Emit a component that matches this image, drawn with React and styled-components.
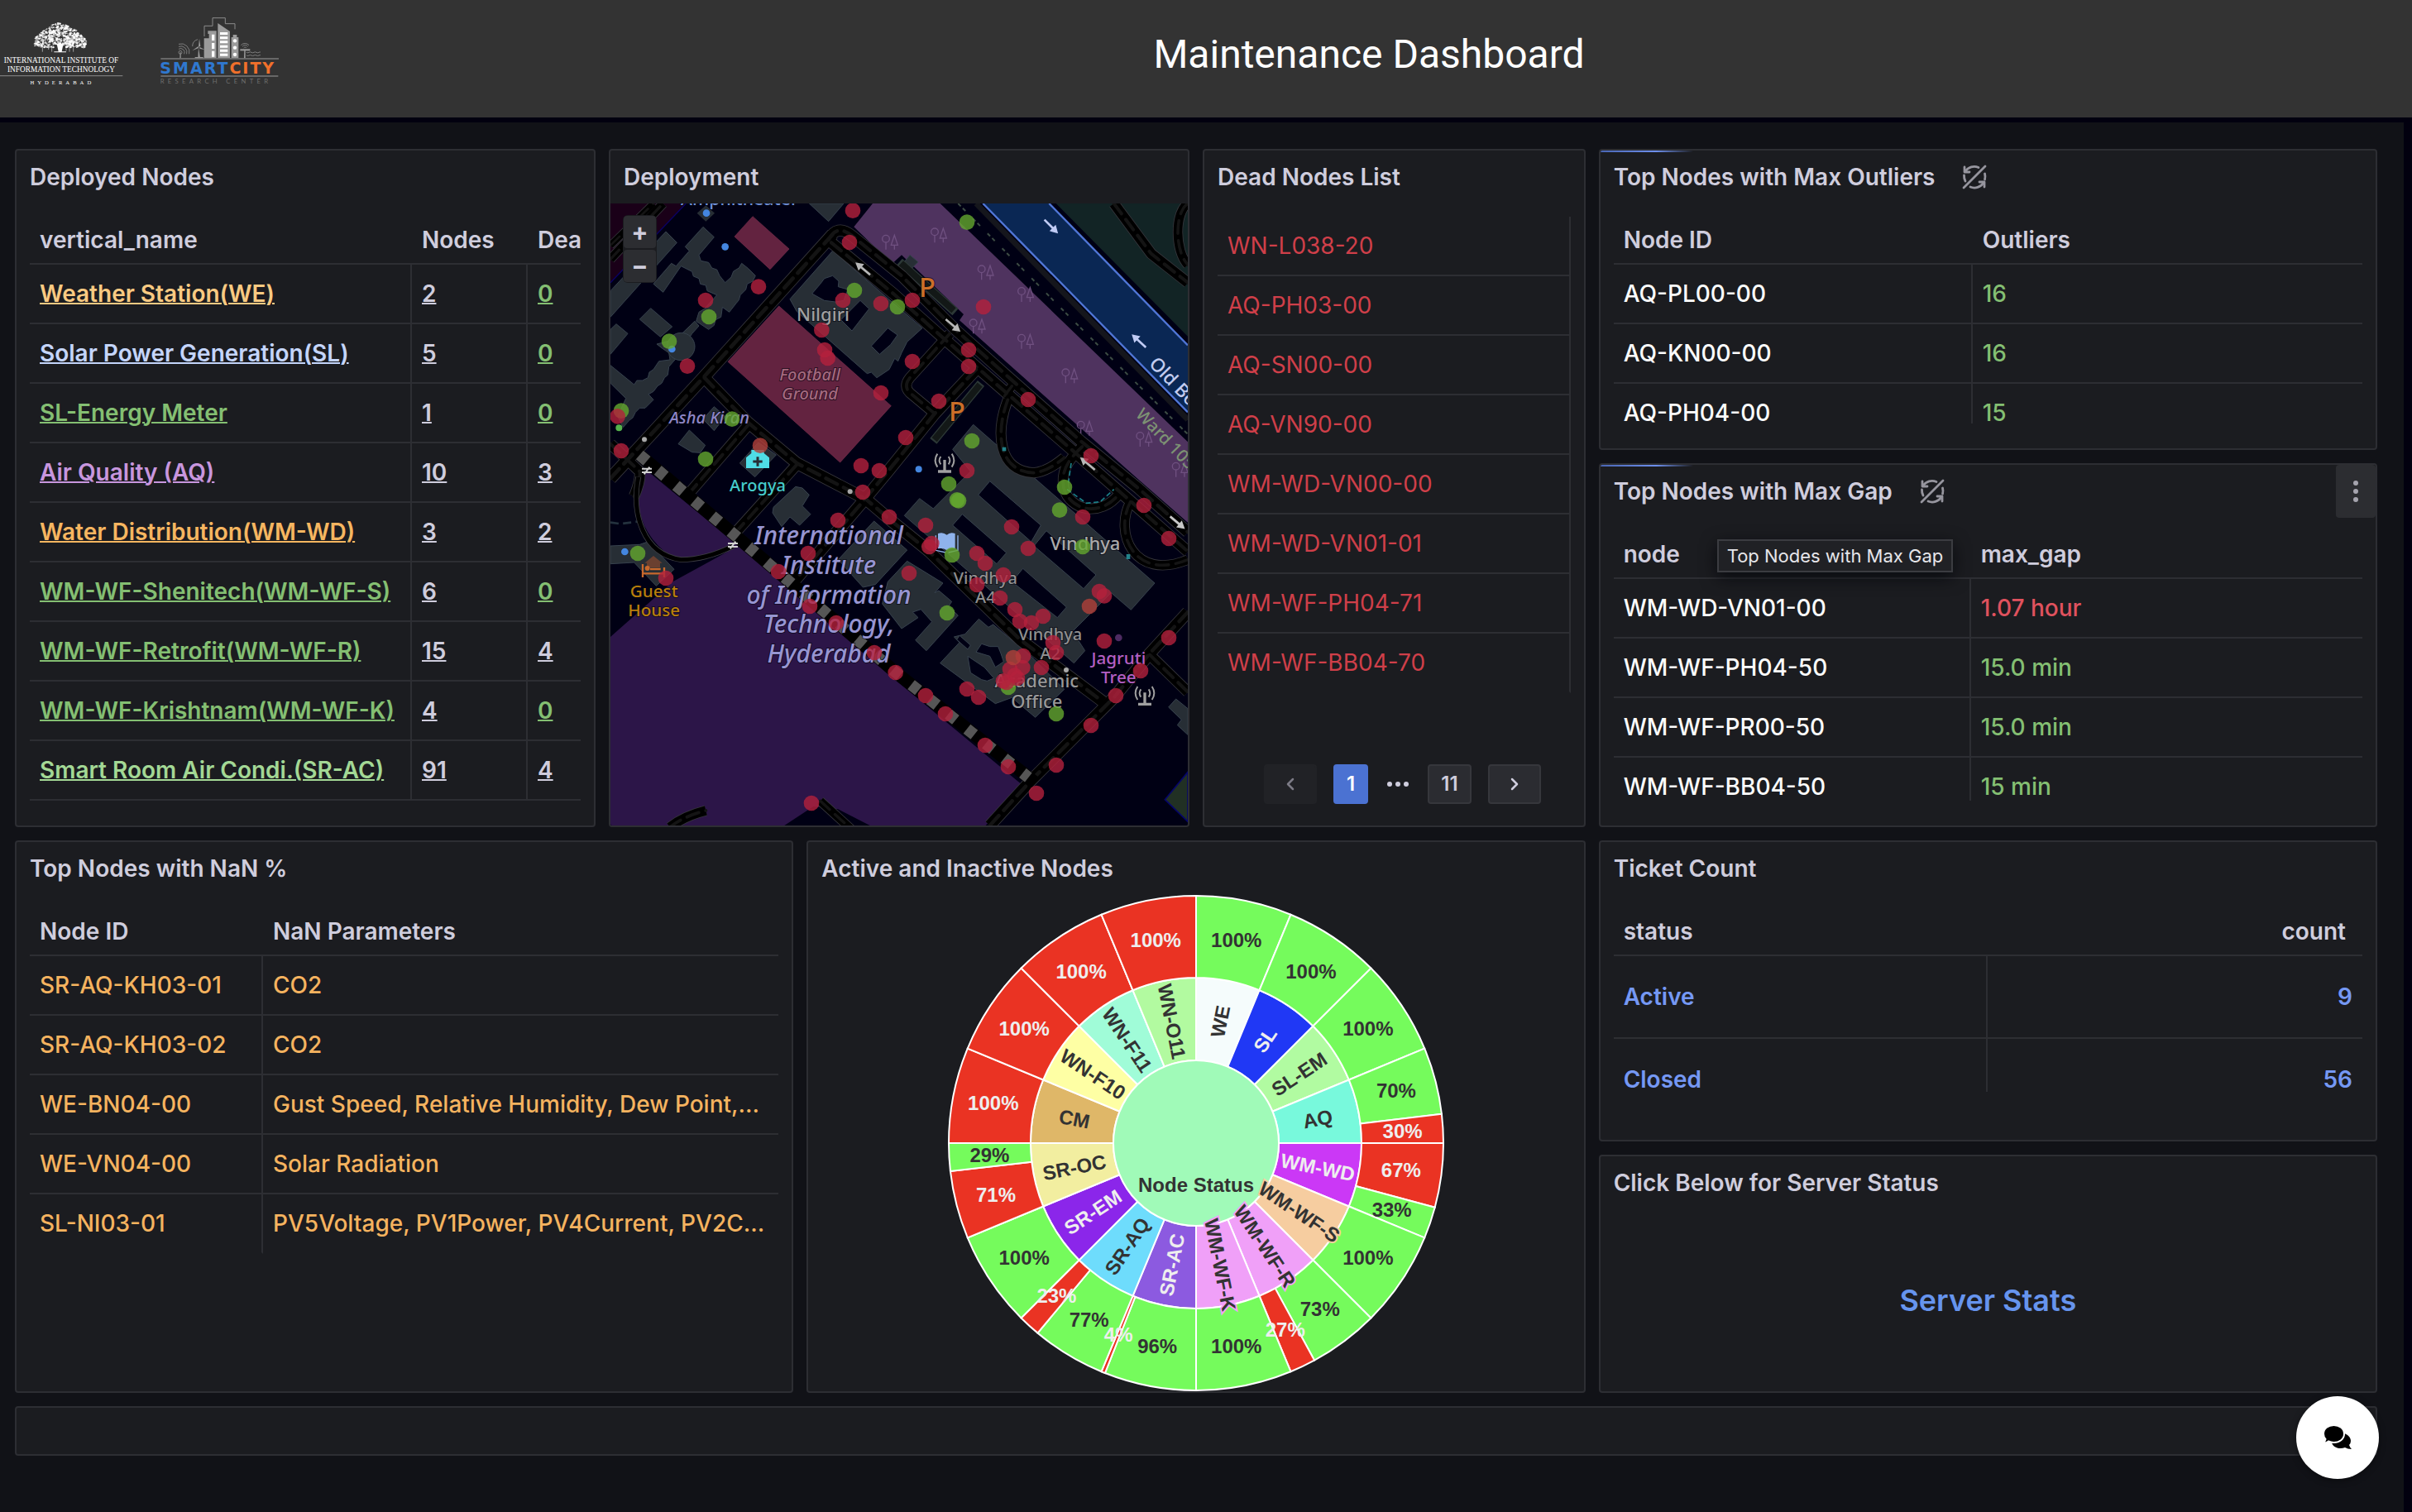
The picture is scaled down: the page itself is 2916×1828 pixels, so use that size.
import React from "react";
import styled, { createGlobalStyle } from "styled-components";

const c = {
  page: "#111217",
  panel: "#1b1c20",
  line: "#2d2e33",
  text: "#cfcddd",
  white: "#fcfcfc",
  green: "#84bf72",
  orange: "#f5b35f",
  red: "#cf3f49",
  blue: "#7598f4",
};

const GlobalStyle = createGlobalStyle`
  * { box-sizing: border-box; }
  body {
    margin: 0;
    background: #02000f;
    color: ${c.text};
    font-family: Inter, "Liberation Sans", sans-serif;
    font-size: 28px;
  }
`;

const Page = styled.div`
  min-height: 100vh;
  display: flex;
  flex-direction: column;
`;

const Header = styled.header`
  display: flex;
  align-items: flex-start;
  background: #333333;
  padding-bottom: 32px;
`;

const Logos = styled.div`
  display: flex;
  gap: 41px;
  padding-right: 52px;
  svg { display: block; }
`;

const PageTitle = styled.h1`
  flex: 1;
  margin: 0;
  padding-top: 38px;
  text-align: center;
  color: #ffffff;
  font: 400 48px/56px Roboto, "Liberation Sans", sans-serif;
`;

const Main = styled.main`
  flex: 1;
  margin: 6px 10px 0 0;
  padding: 32px 32px 68px 18px;
  background: ${c.page};
`;

const Grid = styled.div`
  display: grid;
  grid-template-columns: repeat(24, minmax(0, 1fr));
  grid-auto-rows: 60px;
  gap: 16px;
`;

const PanelBox = styled.section`
  grid-column: ${(p) => p.$col};
  grid-row: ${(p) => p.$row};
  position: relative;
  display: flex;
  flex-direction: column;
  min-width: 0;
  overflow: hidden;
  border: 2px solid ${c.line};
  border-radius: 4px;
  background: ${c.panel};
`;

const PanelHead = styled.div`
  flex: none;
  display: flex;
  align-items: center;
  gap: 32px;
  height: 64px;
  padding-left: 16px;
  color: #96959e;
`;

const PanelTitle = styled.h2`
  margin: 0;
  color: ${c.text};
  font-size: 28px;
  line-height: 44px;
  font-weight: 600;
`;

const LoadingBar = styled.div`
  position: absolute;
  top: 0;
  left: 0;
  width: 12%;
  height: 2px;
  background: linear-gradient(90deg, #4a66b4, #6d8fec 60%, transparent);
`;

const MenuButton = styled.button`
  position: absolute;
  top: 0;
  right: 0;
  width: 48px;
  height: 64px;
  display: grid;
  place-items: center;
  padding: 0;
  border: 0;
  border-radius: 4px;
  background: #2c2d31;
  color: #a5a4ae;
`;

const Tooltip = styled.div`
  position: absolute;
  top: 90px;
  left: 141px;
  padding: 4px 10px;
  border: 2px solid #3b3c41;
  background: #202125;
  box-shadow: 0 6px 20px rgba(1, 4, 9, 0.7);
  color: #e6e6ea;
  font-size: 22px;
  line-height: 28px;
  white-space: nowrap;
`;

const TableClip = styled.div`
  flex: 1;
  min-height: 0;
  overflow: hidden;
  margin: 16px 16px ${(p) => p.$bottom || 30}px;
`;

const Table = styled.table`
  width: ${(p) => p.$width || "100%"};
  table-layout: fixed;
  border-collapse: separate;
  border-spacing: 0;
  line-height: 36px;
`;

const Th = styled.th`
  width: ${(p) => p.$width || "auto"};
  height: 58px;
  padding: 0 ${(p) => (p.$right ? 20 : 12)}px 0 12px;
  border-bottom: 2px solid ${c.line};
  font-weight: 600;
  text-align: ${(p) => (p.$right ? "right" : "left")};
`;

const Td = styled.td`
  height: ${(p) => p.$height || 72}px;
  padding: 0 12px;
  overflow: hidden;
  white-space: nowrap;
  text-overflow: ellipsis;
  border-bottom: 2px solid ${c.line};
  border-right: 2px solid ${c.line};
  color: ${(p) => p.$color || c.text};
  font-weight: ${(p) => p.$weight || 500};
  text-align: ${(p) => (p.$right ? "right" : "left")};
  &:last-child { border-right: ${(p) => (p.$closed ? `2px solid ${c.line}` : 0)}; }
  tr:last-child > & { border-bottom-color: ${(p) => (p.$ruled ? c.line : "transparent")}; }
`;

const CellLink = styled.a`
  color: inherit;
  font-weight: 600;
  text-decoration: underline;
  text-decoration-thickness: 2px;
`;

const Pager = styled.ul`
  flex: none;
  display: flex;
  justify-content: center;
  align-items: center;
  margin: 0;
  padding: 0 16px 26px;
  list-style: none;
  li { padding-left: 20px; display: flex; }
`;

const PageButton = styled.button`
  height: 48px;
  padding: 0 14px;
  min-width: ${(p) => (p.$arrow ? 64 : 40)}px;
  display: flex;
  align-items: center;
  justify-content: center;
  border: 2px solid ${(p) => (p.$active ? "#4b72d2" : "#36373c")};
  border-radius: 4px;
  background: ${(p) => (p.$active ? "#4b72d2" : "#2b2c31")};
  color: ${(p) => (p.$active ? "#ffffff" : c.text)};
  font: 600 24px/28px Inter, "Liberation Sans", sans-serif;
  &:disabled { background: #212226; border-color: #212226; color: #7c7b86; }
`;

const MapBody = styled.div`
  position: relative;
  flex: 1;
  min-height: 0;
  svg { display: block; width: 100%; height: 100%; }
`;

const ZoomControls = styled.div`
  position: absolute;
  top: 14px;
  left: 15px;
  display: flex;
  flex-direction: column;
  gap: 2px;
  padding: 1px;
  border-radius: 6px;
  background: #1b1c20;
`;

const ZoomButton = styled.button`
  width: 39px;
  height: 39px;
  padding: 0;
  border: 0;
  border-radius: 4px;
  background: #2c2d31;
  color: ${c.text};
  font: 700 30px/39px Inter, "Liberation Sans", sans-serif;
`;

const ChartBody = styled.div`
  flex: 1;
  min-height: 0;
  display: flex;
  justify-content: center;
  svg { display: block; height: 100%; max-width: 100%; }
`;

const Centered = styled.div`
  flex: 1;
  display: grid;
  place-items: center;
`;

const ServerLink = styled.a`
  color: #6694ee;
  font-size: 36px;
  line-height: 44px;
  font-weight: 600;
  text-decoration: none;
`;

const ChatButton = styled.button`
  position: fixed;
  right: 40px;
  bottom: 40px;
  width: 100px;
  height: 100px;
  display: grid;
  place-items: center;
  padding: 0;
  border: 0;
  border-radius: 50%;
  background: #ffffff;
  color: #000000;
  box-shadow: 0 2px 8px rgba(0, 0, 0, 0.4);
`;

/* ---------- logos and icons ---------- */

const leaves = (() => {
  let s = 7;
  const rnd = () => ((s = (s * 16807) % 2147483647) / 2147483647);
  const out = [];
  while (out.length < 620) {
    const x = 126 + rnd() * 188;
    const y = 82 + rnd() * 92;
    const dx = Math.abs(x - 216);
    const top = 82 + Math.pow(dx / 94, 1.7) * 62;
    const bottom = 172 - (dx < 20 ? 8 : 0);
    if (y > top && y < bottom) out.push([x, y, 1.5 + rnd() * 3.4, 0.45 + rnd() * 0.55]);
  }
  return out;
})();

const InstituteLogo = () => (
  <svg width="151" height="110" viewBox="0 0 453 330" role="img" aria-label="International Institute of Information Technology Hyderabad">
    <g fill="#fff">
      {leaves.map(([x, y, r, o], i) => (
        <ellipse key={i} cx={x} cy={y} rx={r} ry={r * 0.8} opacity={o} />
      ))}
      <path d="M206 160 L212 187 H196 V190 H240 V187 H224 L230 158 Z" />
    </g>
    <g stroke="#fff" strokeWidth="2" opacity=".8">
      <path d="M154 165V188M176 165V180M188 165V188M240 165V184M252 165V188M266 160V188M280 160V172" />
    </g>
    <g fill="#ffffff" fontFamily="'Liberation Serif', serif" textAnchor="middle">
      <text x="222" y="228" fontSize="28">INTERNATIONAL INSTITUTE OF</text>
      <text x="222" y="261" fontSize="28">INFORMATION TECHNOLOGY</text>
      <text x="226" y="305" fontSize="20" letterSpacing="12">HYDERABAD</text>
    </g>
    <path d="M0 275H445" stroke="#8a8a8a" strokeWidth="3" />
  </svg>
);

const CityLogo = () => (
  <svg width="150" height="110" viewBox="575 0 450 330" role="img" aria-label="Smart City Research Center">
    <path d="M740 132V94H770V65H816V86H851V106" fill="none" stroke="#8b8b8b" strokeWidth="3" />
    <g fill="#9b9b9b">
      <path d="M739 139H757V123H753V112H784V211H739ZM789 84L833 114V211H789ZM838 135H844V126H858V135H864V211H838Z" />
      <path d="M719 172L725 211H717ZM719 170L722 140L726 168ZM719 174L696 184L718 168ZM722 170L742 180L724 177ZM652 190H655V211H651ZM885 180H889V211H884Z" />
      <rect x="870" y="178" width="36" height="6" />
      <rect x="706" y="207" width="30" height="4" />
    </g>
    <g fill="#fff">
      <path d="M767 125H777V147H767ZM767 156H777V177H767ZM767 185H777V206H767Z" />
      <path d="M797 117H825V126H797ZM797 133H825V142H797ZM797 148H825V157H797ZM797 164H825V173H797ZM797 179H825V188H797ZM797 194H825V203H797Z" />
      <circle cx="851" cy="148" r="6.5" />
      <circle cx="851" cy="173" r="6.5" />
      <circle cx="851" cy="198" r="6.5" />
    </g>
    <g fill="none" stroke="#8b8b8b" strokeWidth="2.5">
      <circle cx="653" cy="190" r="6" />
      <path d="M647 178A14 14 0 0 1 667 196M647 169A22 22 0 0 1 676 196M647 160A30 30 0 0 1 685 196M697 168A26 26 0 0 1 716 143" />
      <path d="M873 164A19 19 0 0 1 902 164M878 169A12 12 0 0 1 898 169M883 174A6 6 0 0 1 893 174" />
      <path d="M893 190q5 3 9 0t9 0 9 0 9 0 9 0 6 0M893 201q5 3 9 0t9 0 9 0 9 0 9 0 6 0" />
    </g>
    <path d="M582 213H1010M582 276H1008" stroke="#7a7a7a" strokeWidth="4" />
    <text x="579" y="266" fontFamily="'DejaVu Sans', sans-serif" fontSize="57" fontWeight="700" letterSpacing="6" fill="#2f78cf">
      SMART<tspan fill="#f0702b">CITY</tspan>
    </text>
    <text x="580" y="303" fontFamily="Lato, sans-serif" fontSize="23" letterSpacing="13" fill="#6e6e6e">
      RESEARCH CENTER
    </text>
  </svg>
);

const NoRefreshIcon = () => (
  <svg width="32" height="32" viewBox="0 0 32 32" fill="none" stroke="currentColor" strokeWidth="2.8" strokeLinecap="round" strokeLinejoin="round" role="img" aria-label="Auto refresh off">
    <path d="M29 3L3 29" />
    <path d="M4 4V10H10" />
    <path d="M5 9A13 13 0 0 1 21 4.500" />
    <path d="M3.500 14A13 13 0 0 0 5 21" />
    <path d="M28.500 12A13 13 0 0 1 28.500 19" />
    <path d="M28 28V22H22" />
    <path d="M27 23A13 13 0 0 1 11 28" />
  </svg>
);

const Chevron = ({ left }) => (
  <svg width="12" height="16" viewBox="0 0 12 16" fill="none" stroke="currentColor" strokeWidth="2.5" strokeLinecap="round" strokeLinejoin="round" aria-hidden="true">
    <path d={left ? "M9 2L3 8L9 14" : "M3 2L9 8L3 14"} />
  </svg>
);

const Dots = ({ vertical }) => (
  <svg width="32" height="32" viewBox="0 0 32 32" fill="currentColor" aria-hidden="true">
    {[6, 16, 26].map((n) => (
      <circle key={n} cx={vertical ? 16 : n} cy={vertical ? n : 16} r="3" />
    ))}
  </svg>
);

const ChatIcon = () => (
  <svg width="34" height="30" viewBox="0 0 34 30" fill="currentColor" aria-hidden="true">
    <path d="M14 8C22 8 33 11 33 19Q33 22 31 24Q32 27 34 29Q29 29 26 27C18 30 11 26 10 21Z" />
    <path d="M12.500 0C19 0 25 4 25 10.500S19 21 12.500 21Q9 21 6 19.500Q3 21.500 0 21.500Q2 19 2.500 17Q0 14 0 10.500C0 4 6 0 12.500 0Z" stroke="#fff" strokeWidth="2" />
  </svg>
);

/* ---------- map ---------- */

const buildings = [
  "225,330 265,370 24,640 24,545",
  "360,313 400,350 345,415 352,436 380,442 392,462 410,468 420,490 440,515 462,495 470,474 490,462 500,445 524,464 550,490 540,510 520,520 515,540 495,560 490,578 480,590 455,622 430,604 425,640 405,650 400,670 380,685 335,655 345,622 365,610 410,560 375,545 370,525 350,520 345,500 325,492 320,475 280,455 215,550 180,520 245,445 262,455 310,400 295,385",
  "170,608 248,675 205,712 130,648",
  "320,700 345,672 330,655 262,720 192,738 210,752 236,770 240,795 200,800 180,830 165,840 160,860 140,870 120,870 110,885 24,815 24,880 80,935 50,1000 70,1040 92,1015 105,1005 115,985 130,970 150,970 180,940 162,920 180,910 195,890 210,880 220,860 232,850 236,820 262,790",
  "45,665 87,700 24,775 24,685",
  "400,965 440,1000 400,1052 360,1010",
  "310,1050 368,1105 350,1132 320,1130 270,1100",
  "560,1095 625,1140 548,1220 493,1170",
  "745,228 870,228 815,293",
  "830,400 1155,680 1100,730 1080,770 1067,800 1055,790 1035,830 990,860 970,840 955,845 700,620 675,575",
  "695,1255 720,1260 745,1285 720,1325 750,1355 710,1395 675,1365 645,1400 612,1350 615,1330",
  "980,1380 1100,1485 985,1610 940,1620 850,1520",
  "1100,1525 1230,1605 1200,1640 1215,1632 1262,1672 1250,1690 1285,1722 1170,1850 1130,1812 1190,1745 1150,1700 1120,1710 1140,1730 1080,1770 1010,1680 1030,1600",
  "1360,1735 1395,1765 1412,1755 1560,1880 1670,1990 1565,2092 1480,2020 1420,2042 1220,1895 1290,1820 1270,1800 1310,1790",
  "1340,1030 1998,1605 1912,1702 1840,1640 1700,1780 1745,1850 1705,1895 1090,1360 1145,1298 1195,1335 1330,1200 1265,1120",
  "2075,2025 2118,2060 2118,2155 2080,2120 2095,2100 2048,2055",
  "24,1470 130,1465 160,1455 255,1555 190,1615 110,1530 24,1535",
  "1082,450 1110,415 1140,440 1100,480",
];

const voids = [
  "830,490 852,510 850,530 885,540 870,580 840,585 800,580 755,555 785,520 800,500",
  "930,580 962,610 900,690 860,650",
  "1030,680 1065,705 1040,740 1000,775 970,745",
  "1400,1235 1585,1395 1550,1455 1358,1285",
  "1300,1355 1460,1495 1425,1535 1265,1395",
  "1605,1415 1785,1575 1740,1625 1560,1470",
  "1520,1552 1678,1692 1645,1730 1480,1600",
  "1370,1825 1400,1835 1430,1835 1440,1860 1450,1890 1420,1910 1400,1870 1350,1855",
  "1320,1870 1380,1910 1415,1950 1390,1960 1370,1955 1330,1930",
  "1290,1795 1330,1830 1320,1845 1280,1810",
];

const roads = [
  [24, "M24,380 L180,228"],
  [30, "M24,430 L215,228"],
  [42, "M24,1225 L365,855 L830,340"],
  [38, "M815,360 Q845,300 900,345 L1080,490 L1280,690 L1470,860 L1730,1090 L1940,1262 L2118,1420"],
  [38, "M825,370 L1050,555 L1230,715 L1460,915 L1690,1115 L1890,1290 L2118,1490"],
  [34, "M1255,700 L1110,860 Q1085,890 1110,915 L1200,990"],
  [40, "M1350,830 L1200,990 L1030,1200 L930,1320 L680,1610"],
  [30, "M1480,890 L1450,930"],
  [40, "M365,860 L520,1020 L700,1170 L950,1300 L1050,1385 L1180,1490 L1510,1810 L1810,2035"],
  [36, "M525,1030 L300,1290"],
  [36, "M700,1175 L470,1430"],
  [40, "M2118,1710 L1980,1860 L1850,2020 L1550,2320 L1400,2484"],
  [36, "M1980,1865 L2118,2000"],
  [34, "M1465,940 C1420,1060 1430,1200 1560,1205 Q1610,1200 1670,1150"],
  [34, "M1735,1110 C1670,1170 1660,1210 1668,1260 C1690,1340 1800,1370 1870,1280"],
  [32, "M1910,1310 C1850,1420 1920,1600 2118,1520"],
  [36, "M1850,228 L1985,410 L2118,515"],
  [32, "M2118,228 C2070,260 2070,400 2118,450"],
  [34, "M240,2490 Q290,2450 370,2430"],
  [30, "M785,2395 L900,2500"],
  [36, "M24,1100 L130,1200 Q135,1230 110,1290"],
];

const redNodes = "903,254 891,369 561,530 369,579 867,579 1005,591 303,818 790,687 801,759 812,789 1005,915 50,1000 63,1125 933,1179 999,1197 1095,1077 1119,579 1377,603 1323,759 1323,819 1119,801 1215,945 1539,939 1767,1143 1317,1197 939,1275 849,1377 1035,1365 741,1497 633,1563 225,1587 747,1689 843,1749 981,1857 1058,1929 753,2403 1167,1395 1180,1473 1189,1461 1107,1569 1353,1497 1383,1533 1479,1401 1539,1479 1449,1575 1353,1611 1437,1659 1491,1701 1509,1743 1551,1749 1593,1725 1629,1821 1641,1857 1587,1911 1797,1635 1815,1651 1737,1365 1959,1323 2049,1443 2049,1803 1815,1815 1947,1923 1857,2013 1767,2121 1641,2265 1569,2367 1467,2271 1383,2193 1239,2079 1167,2013 1317,1989 1359,2019 1521,1869 1519,1911 1473,1917 1490,1940 1449,1960 1461,1965 1500,1950";
const amberNodes = "567,1106 1761,1689 1485,1875";
const greenNodes = "909,543 1065,603 381,639 237,728 63,980 465,1010 369,1155 1317,296 1335,1089 1671,1257 1251,1245 123,1497 1281,1303 1287,1306 1653,1340 1263,1503 1245,1713 1737,1473 1467,1983 1641,2079";

const NodeDots = ({ points, fill }) =>
  points.split(" ").map((p, i) => {
    const [x, y] = p.split(",");
    return <circle key={i} cx={x} cy={y} r="28" fill={fill} fillOpacity=".8" />;
  });

const trees = [[165, 340], [335, 475], [480, 555], [305, 670], [480, 725], [640, 850], [695, 1040], [910, 1080], [1040, 1190], [-12, 365]];

const MapLabel = ({ lines, x, y, step = 70, size = 64, fill = "#aaaaaa", italic }) => (
  <text
    textAnchor="middle"
    fontSize={size}
    fontWeight="500"
    fill={fill}
    fontStyle={italic ? "italic" : "normal"}
    stroke="#05050f"
    strokeWidth="6"
    strokeOpacity=".6"
    paintOrder="stroke"
  >
    {lines.map((l, i) => (
      <tspan key={l} x={x} y={y + i * step}>{l}</tspan>
    ))}
  </text>
);

const Antenna = ({ x, y }) => (
  <g transform={`translate(${x} ${y})`} fill="none" stroke="#a0a0a0" strokeWidth="6">
    <path d="M0,0 V42 M-24,42 H24" strokeWidth="10" />
    <path d="M-14,-12 Q-24,2 -14,16 M14,-12 Q24,2 14,16 M-26,-22 Q-42,2 -26,26 M26,-22 Q42,2 26,26" />
  </g>
);

const Arrow = ({ x, y, angle, fill }) => (
  <path transform={`translate(${x} ${y}) rotate(${angle})`} d="M-34,-4 H8 V-16 L36,0 L8,16 V4 H-34Z" fill={fill} />
);

const CampusMap = () => (
  <svg viewBox="24 228 2094 2256" preserveAspectRatio="xMidYMid slice" fontFamily="'Noto Sans', sans-serif" role="img" aria-label="Node deployment map">
    <rect x="24" y="228" width="2094" height="2256" fill="#000014" />
    <path d="M24,228 H298 L24,515Z" fill="#1a0018" />
    <path d="M298,228 L24,515" stroke="#0b0066" strokeWidth="4" />
    <path d="M1640,228 H2118 V710Z" fill="#122425" />
    <path d="M1350,228 L2118,1012" stroke="#15161c" strokeWidth="20" />
    <path d="M1375,228 H1615 L2118,742 V985Z" fill="#0a2754" />
    <path d="M1375,228 L2118,985 M1615,228 L2118,742" stroke="#5076d6" strokeWidth="7" />
    <path d="M975,228 H1220 L2118,1093 V1385 L1940,1230 L1290,652 L1305,630 L1080,415 L1045,447 L907,313Z" fill="#4f335f" />
    <path d="M1285,228 L1380,325 L1690,640 L2118,1065" fill="none" stroke="#3d4c44" strokeWidth="6" strokeDasharray="14 10 14 38" />
    {trees.map(([x, y]) => (
      <g key={x} transform={`translate(${x + 1050} ${y})`} fill="none" stroke="#6f5080" strokeWidth="4">
        <path d="M-15,30 V5 M16,30 V14 M4,14 L16,-22 L28,14Z" />
        <circle cx="-15" cy="-9" r="13" />
      </g>
    ))}
    <path d="M160,1200 L480,1462 L1050,1950 L1515,2335 L1385,2484 H24 V1800 L250,1600 L450,1490 Q300,1540 220,1490 Q110,1400 125,1240Z" fill="#2c1548" />
    <path d="M655,2484 L760,2415 L850,2425 L965,2484Z" fill="#000014" />
    <path d="M2035,2390 L2118,2290 V2470Z" fill="#213024" stroke="#05056a" strokeWidth="5" />
    <g fill="#272e35" stroke="#37424e" strokeWidth="3">
      {buildings.map((b) => <polygon key={b} points={b} />)}
      <circle cx="280" cy="747" r="50" />
    </g>
    <g fill="#000014" stroke="#37424e" strokeWidth="3">
      {voids.map((b) => <polygon key={b} points={b} />)}
    </g>
    <g fill="#632340" stroke="#7a2f4f" strokeWidth="2">
      <polygon points="540,275 672,393 603,467 474,348" />
      <polygon points="635,600 1042,962 857,1167 450,802" />
    </g>
    <path d="M24,1385 L60,1390 L120,1382" fill="none" stroke="#24323e" strokeWidth="8" strokeDasharray="30 16" />
    <g fill="none">
      <path d="M1072,440 L1275,622 M1368,880 L1195,1090" stroke="#2c3836" strokeWidth="32" />
      <path d="M1078,445 L1269,616 M1364,885 L1199,1085" stroke="#131817" strokeWidth="24" />
    </g>
    <g fill="none" strokeLinejoin="round">
      {roads.map(([w, d]) => <path key={d} d={d} stroke="#36363c" strokeWidth={w + 5} />)}
      {roads.map(([w, d]) => <path key={d} d={d} stroke="#000000" strokeWidth={w} />)}
      {roads.map(([w, d]) => <path key={d} d={d} stroke="#141414" strokeWidth={w / 3} strokeDasharray="46 26" strokeLinecap="round" />)}
      <path d="M125,1220 C100,1350 140,1500 280,1520 Q370,1520 470,1470" stroke="#3c3c42" strokeWidth="20" />
      <path d="M125,1220 C100,1350 140,1500 280,1520 Q370,1520 470,1470" stroke="#000" strokeWidth="15" />
      <path d="M130,1140 L480,1435 L1060,1930 L1560,2325" stroke="#000" strokeWidth="46" />
      <path d="M130,1140 L480,1435 L1060,1930 L1540,2310" stroke="#565656" strokeWidth="42" strokeDasharray="34 52" />
      <path d="M1695,1170 L1685,1240 M1680,1265 L1750,1315 L1800,1310 L1850,1265" stroke="#1a8088" strokeWidth="5" strokeDasharray="18 10" />
    </g>
    <g fill="#23828a"><rect x="1445" y="1112" width="14" height="14" /><rect x="1895" y="1500" width="14" height="18" /></g>

    <Arrow x={940} y={465} angle={-140} fill="#b8b8b8" />
    <Arrow x={1266} y={670} angle={40} fill="#b8b8b8" />
    <Arrow x={1755} y={1172} angle={-140} fill="#b8b8b8" />
    <Arrow x={2080} y={1385} angle={40} fill="#c8c8c8" />
    <Arrow x={1622} y={311} angle={45} fill="#c0cbf4" />
    <Arrow x={1941} y={727} angle={-137} fill="#c0cbf4" />

    <path d="M370,235 l32,28 -32,30 -32,-30Z" fill="#272e35" />
    <g fill="#4486e0">
      <circle cx="372" cy="263" r="13" />
      <circle cx="440" cy="385" r="13" />
      <circle cx="247" cy="756" r="13" />
      <circle cx="76" cy="1491" r="13" />
      <circle cx="1142" cy="1192" r="12" />
    </g>
    <circle cx="55" cy="1042" r="12" fill="#55b24c" />
    <circle cx="1867" cy="1803" r="13" fill="#4d2b62" />
    <g fill="#a8a8a8">
      <circle cx="147" cy="1084" r="9" />
      <circle cx="893" cy="1273" r="9" />
      <circle cx="1677" cy="1920" r="9" />
    </g>
    <path d="M138,1190 H174 M138,1203 H174 M166,1184 L146,1210 M450,1461 H486 M450,1473 H486 M478,1454 L458,1480" stroke="#d0d0d0" strokeWidth="6" />
    <path d="M516,1188 V1150 L535,1134 V1122 H581 V1134 L600,1150 V1188Z" fill="#4fdde6" />
    <path d="M541,1164 H575 M558,1147 V1181" stroke="#272e35" strokeWidth="9" />
    <path d="M180,1506 L212,1532 H204 V1548 H156 V1532 H148Z" fill="#6a4030" />
    <path d="M141,1536 V1584 M219,1548 V1584 M141,1570 H219 M168,1554 H206" stroke="#c8682c" strokeWidth="7" />
    <circle cx="158" cy="1551" r="9" fill="#c8682c" />
    <path d="M1212,1425 Q1230,1418 1244,1430 Q1256,1418 1274,1425 V1480 Q1256,1476 1244,1486 Q1230,1476 1212,1480Z" fill="#8fb3ec" />
    <path d="M1204,1432 V1486 L1240,1494 M1284,1432 V1486 L1250,1494" fill="none" stroke="#8fb3ec" strokeWidth="4" />
    <Antenna x={1236} y={1158} />
    <Antenna x={1962} y={2002} />

    <MapLabel lines={["Amphitheater"]} x={492} y={234} size={64} fill="#6f90d8" />
    <MapLabel lines={["Nilgiri"]} x={795} y={653} size={66} fill="#a0a0a0" />
    <MapLabel lines={["Football", "Ground"]} x={747} y={869} size={60} fill="#a5697f" italic />
    <MapLabel lines={["Asha Kiran"]} x={383} y={1027} size={60} fill="#8e86c6" italic />
    <MapLabel lines={["Arogya"]} x={558} y={1271} size={60} fill="#45cccb" />
    <MapLabel lines={["Guest", "House"]} x={182} y={1655} size={62} step={71} fill="#b97f0c" />
    <MapLabel lines={["International", "Institute", "of Information", "Technology,", "Hyderabad"]} x={816} y={1465} size={90} step={107} fill="#9795d2" italic />
    <MapLabel lines={["Vindhya"]} x={1746} y={1485} size={66} />
    <MapLabel lines={["Vindhya", "A4"]} x={1384} y={1607} size={60} step={69} fill="#909090" />
    <MapLabel lines={["Vindhya", "A2"]} x={1619} y={1813} size={60} step={69} fill="#909090" />
    <MapLabel lines={["Academic", "Office"]} x={1570} y={1982} size={66} step={77} fill="#989898" />
    <MapLabel lines={["Jagruti", "Tree"]} x={1867} y={1898} size={62} step={70} fill="#b45fc4" />
    <MapLabel lines={["P"]} x={1173} y={568} size={98} fill="#cc6f28" />
    <MapLabel lines={["P"]} x={1281} y={1018} size={98} fill="#cc6f28" />
    <text transform="translate(1974 812) rotate(46)" fontSize="68" fontWeight="500" fill="#c2ccf0">Old Bombay</text>
    <text transform="translate(1926 996) rotate(46)" fontSize="62" fontWeight="500" fill="#7d9273">Ward 105</text>

    <NodeDots points={greenNodes} fill="#64a82e" />
    <NodeDots points={redNodes} fill="#b4203c" />
    <NodeDots points={amberNodes} fill="#b2403a" />
  </svg>
);

/* ---------- sunburst ---------- */

const G = "#75fb5c";
const R = "#ea3323";
const sectors = [
  ["WE", "#f5fcfc", [[100, G]]],
  ["SL", "#2038f5", [[100, G]]],
  ["SL-EM", "#b1fba1", [[100, G]]],
  ["AQ", "#78f9dc", [[70, G], [30, R]]],
  ["WM-WD", "#cb38f6", [[67, R], [33, G]]],
  ["WM-WF-S", "#f6cda0", [[100, G]]],
  ["WM-WF-R", "#f0a0f8", [[73, G], [27, R]]],
  ["WM-WF-K", "#f0a0f8", [[100, G]]],
  ["SR-AC", "#8c5ae0", [[96, G], [4, R]]],
  ["SR-AQ", "#6edcfc", [[77, G], [23, R]]],
  ["SR-EM", "#8b26ea", [[100, G]]],
  ["SR-OC", "#f2eea0", [[71, R], [29, G]]],
  ["CM", "#dfb768", [[100, R]]],
  ["WN-F10", "#feffa4", [[100, R]]],
  ["WN-F11", "#a0fcd8", [[100, R]]],
  ["WN-O11", "#b2faa0", [[100, R]]],
];
const lightLabels = ["SL", "WM-WD", "SR-AC", "SR-EM"];

const polar = (r, deg) => {
  const a = ((deg - 90) * Math.PI) / 180;
  return [r * Math.cos(a), r * Math.sin(a)];
};
const ring = (r0, r1, a0, a1) =>
  `M${polar(r0, a0)} L${polar(r1, a0)} A${r1},${r1} 0 0 1 ${polar(r1, a1)} L${polar(r0, a1)} A${r0},${r0} 0 0 0 ${polar(r0, a0)}Z`;

const Sunburst = () => {
  const span = 360 / sectors.length;
  const labels = [];
  const shapes = [];
  sectors.forEach(([name, color, parts], i) => {
    const start = i * span;
    const mid = start + span / 2;
    const [x, y] = polar(150, mid);
    const turn = mid < 180 ? mid - 90 : mid + 90;
    shapes.push(<path key={name} d={ring(100, 200, start, start + span)} fill={color} />);
    labels.push(
      <text key={name} transform={`translate(${x} ${y}) rotate(${turn})`} fill={lightLabels.includes(name) ? "#eeeeee" : "#333333"} stroke={color} strokeWidth="4" paintOrder="stroke">
        {name}
      </text>
    );
    let at = start;
    parts.forEach(([pct, fill], k) => {
      const end = at + (span * pct) / 100;
      const [lx, ly] = polar(250, (at + end) / 2);
      shapes.push(<path key={name + k} d={ring(200, 299, at, end)} fill={fill} />);
      labels.push(
        <text key={name + k} x={lx} y={ly} fill={fill === R ? "#eeeeee" : "#333333"}>
          {pct}%
        </text>
      );
      at = end;
    });
  });
  return (
    <svg viewBox="-300 -300 600 600" role="img" aria-label="Active and inactive nodes by vertical">
      <g stroke="#ffffff" strokeWidth="2">
        {shapes}
        <circle r="100" fill="#a0fab8" />
      </g>
      <g fontFamily="'Liberation Sans', Arial, sans-serif" fontSize="24" fontWeight="700" textAnchor="middle" dominantBaseline="central">
        <text y="50" fill="#333333">Node Status</text>
        {labels}
      </g>
    </svg>
  );
};

/* ---------- data ---------- */

const deployed = [
  ["Weather Station(WE)", 2, 0, "#f9ca82"],
  ["Solar Power Generation(SL)", 5, 0, "#c4d5fb"],
  ["SL-Energy Meter", 1, 0, c.green],
  ["Air Quality (AQ)", 10, 3, "#c896de"],
  ["Water Distribution(WM-WD)", 3, 2, "#f6b660"],
  ["WM-WF-Shenitech(WM-WF-S)", 6, 0, c.green],
  ["WM-WF-Retrofit(WM-WF-R)", 15, 4, c.green],
  ["WM-WF-Krishtnam(WM-WF-K)", 4, 0, c.green],
  ["Smart Room Air Condi.(SR-AC)", 91, 4, "#a3d895"],
];
const dead = ["WN-L038-20", "AQ-PH03-00", "AQ-SN00-00", "AQ-VN90-00", "WM-WD-VN00-00", "WM-WD-VN01-01", "WM-WF-PH04-71", "WM-WF-BB04-70"];
const outliers = [["AQ-PL00-00", 16], ["AQ-KN00-00", 16], ["AQ-PH04-00", 15]];
const gaps = [
  ["WM-WD-VN01-00", "1.07 hour", "#e0525e"],
  ["WM-WF-PH04-50", "15.0 min", c.green],
  ["WM-WF-PR00-50", "15.0 min", c.green],
  ["WM-WF-BB04-50", "15 min", c.green],
];
const nans = [
  ["SR-AQ-KH03-01", "CO2"],
  ["SR-AQ-KH03-02", "CO2"],
  ["WE-BN04-00", "Gust Speed, Relative Humidity, Dew Point,Wind Speed"],
  ["WE-VN04-00", "Solar Radiation"],
  ["SL-NI03-01", "PV5Voltage, PV1Power, PV4Current, PV2Current, PV3Power"],
];
const tickets = [["Active", 9], ["Closed", 56]];

const Panel = ({ title, col, row, loading, children }) => (
  <PanelBox $col={col} $row={row}>
    {loading && <LoadingBar />}
    <PanelHead>
      <PanelTitle>{title}</PanelTitle>
      {loading && <NoRefreshIcon />}
    </PanelHead>
    {children}
  </PanelBox>
);

export default function App() {
  return (
    <Page>
      <GlobalStyle />
      <Header>
        <Logos>
          <InstituteLogo />
          <CityLogo />
        </Logos>
        <PageTitle>Maintenance Dashboard</PageTitle>
      </Header>
      <Main>
        <Grid>
          <Panel title="Deployed Nodes" col="1 / span 6" row="1 / span 11">
            <TableClip $bottom={16}>
              <Table $width="802px">
                <thead>
                  <tr>
                    <Th $width="462px">vertical_name</Th>
                    <Th $width="140px">Nodes</Th>
                    <Th>Dead</Th>
                  </tr>
                </thead>
                <tbody>
                  {deployed.map(([name, nodes, deadCount, color]) => (
                    <tr key={name}>
                      <Td $ruled $color={color}><CellLink href="#">{name}</CellLink></Td>
                      <Td $ruled><CellLink href="#">{nodes}</CellLink></Td>
                      <Td $ruled $color={deadCount ? c.text : c.green}><CellLink href="#">{deadCount}</CellLink></Td>
                    </tr>
                  ))}
                </tbody>
              </Table>
            </TableClip>
          </Panel>

          <Panel title="Deployment" col="7 / span 6" row="1 / span 11">
            <MapBody>
              <CampusMap />
              <ZoomControls>
                <ZoomButton type="button" aria-label="Zoom in">+</ZoomButton>
                <ZoomButton type="button" aria-label="Zoom out">−</ZoomButton>
              </ZoomControls>
            </MapBody>
          </Panel>

          <Panel title="Dead Nodes List" col="13 / span 4" row="1 / span 11">
            <TableClip $bottom={16}>
              <Table>
                <tbody>
                  {dead.map((n) => (
                    <tr key={n}><Td $closed $weight={400} $color={c.red}>{n}</Td></tr>
                  ))}
                </tbody>
              </Table>
            </TableClip>
            <Pager>
              <li><PageButton type="button" $arrow disabled aria-label="Previous page"><Chevron left /></PageButton></li>
              <li><PageButton type="button" $active>1</PageButton></li>
              <li><Dots /></li>
              <li><PageButton type="button">11</PageButton></li>
              <li><PageButton type="button" $arrow aria-label="Next page"><Chevron /></PageButton></li>
            </Pager>
          </Panel>

          <Panel title="Top Nodes with Max Outliers" col="17 / span 8" row="1 / span 5" loading>
            <TableClip>
              <Table>
                <thead><tr><Th $width="434px">Node ID</Th><Th>Outliers</Th></tr></thead>
                <tbody>
                  {outliers.map(([id, n]) => (
                    <tr key={id}><Td $color={c.white}>{id}</Td><Td $color={c.green}>{n}</Td></tr>
                  ))}
                </tbody>
              </Table>
            </TableClip>
          </Panel>

          <Panel title="Top Nodes with Max Gap" col="17 / span 8" row="6 / span 6" loading>
            <TableClip>
              <Table>
                <thead><tr><Th $width="432px">node</Th><Th>max_gap</Th></tr></thead>
                <tbody>
                  {gaps.map(([id, gap, color]) => (
                    <tr key={id}><Td $color={c.white}>{id}</Td><Td $color={color}>{gap}</Td></tr>
                  ))}
                </tbody>
              </Table>
            </TableClip>
            <MenuButton type="button" aria-label="Panel menu"><Dots vertical /></MenuButton>
            <Tooltip role="tooltip">Top Nodes with Max Gap</Tooltip>
          </Panel>

          <Panel title="Top Nodes with NaN %" col="1 / span 8" row="12 / span 9">
            <TableClip>
              <Table>
                <thead><tr><Th $width="282px">Node ID</Th><Th>NaN Parameters</Th></tr></thead>
                <tbody>
                  {nans.map(([id, params]) => (
                    <tr key={id}><Td $color={c.orange}>{id}</Td><Td $color={c.orange}>{params}</Td></tr>
                  ))}
                </tbody>
              </Table>
            </TableClip>
          </Panel>

          <Panel title="Active and Inactive Nodes" col="9 / span 8" row="12 / span 9">
            <ChartBody><Sunburst /></ChartBody>
          </Panel>

          <Panel title="Ticket Count" col="17 / span 8" row="12 / span 5">
            <TableClip $bottom={58}>
              <Table>
                <thead><tr><Th $width="452px">status</Th><Th $right>count</Th></tr></thead>
                <tbody>
                  {tickets.map(([status, n]) => (
                    <tr key={status}>
                      <Td $height={100} $color={c.blue} $weight={600}>{status}</Td>
                      <Td $height={100} $color={c.blue} $weight={600} $right>{n}</Td>
                    </tr>
                  ))}
                </tbody>
              </Table>
            </TableClip>
          </Panel>

          <Panel title="Click Below for Server Status" col="17 / span 8" row="17 / span 4">
            <Centered><ServerLink href="#">Server Stats</ServerLink></Centered>
          </Panel>

          <PanelBox $col="1 / span 24" $row="21 / span 1" />
        </Grid>
      </Main>
      <ChatButton type="button" aria-label="Open chat"><ChatIcon /></ChatButton>
    </Page>
  );
}
